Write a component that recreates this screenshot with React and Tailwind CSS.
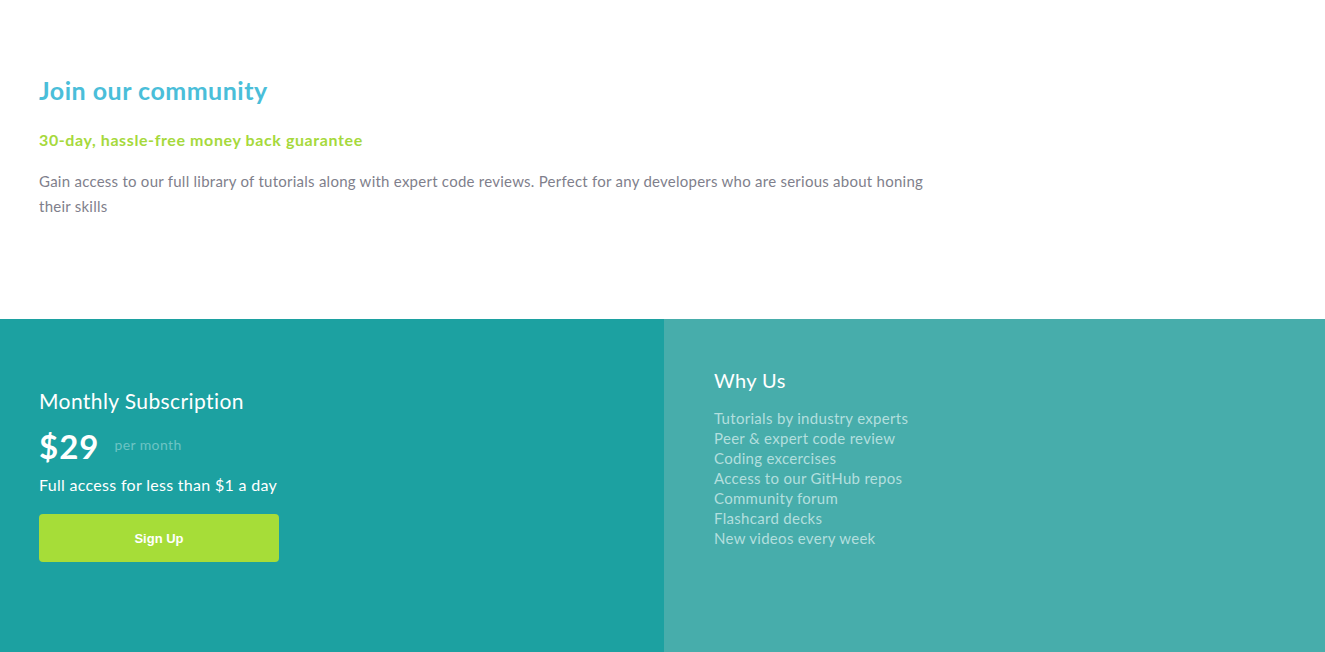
import React from 'react';

const perks = [
    'Tutorials by industry experts',
    'Peer & expert code review',
    'Coding excercises',
    'Access to our GitHub repos',
    'Community forum',
    'Flashcard decks',
    'New videos every week',
];

const App = () => {
    return (
        <div className="w-full min-h-[652px] bg-white font-['Lato',sans-serif]">
            <section className="h-[319px] px-[39px] pt-[75px]">
                <h1 className="text-[25px] leading-[30px] tracking-[0.5px] font-bold text-[#4abed9]">Join our community</h1>
                <h2 className="mt-[24px] text-[16px] leading-[22px] tracking-[0.6px] font-bold text-[#a6d93c]">
                    30-day, hassle-free money back guarantee
                </h2>
                <p className="mt-[18px] max-w-[900px] text-[15px] leading-[25px] tracking-[0.25px] text-[#7f7f8c]">
                    Gain access to our full library of tutorials along with expert code reviews. Perfect for any developers who are serious about honing their skills
                </p>
            </section>

            <section className="grid grid-cols-[664px_1fr] h-[333px]">
                <div className="bg-[#1ca1a1] px-[39px] pt-[69px] text-white">
                    <h3 className="text-[21px] leading-[26px] tracking-[0.4px]">Monthly Subscription</h3>
                    <div className="mt-[12px] flex items-center gap-[15px]">
                        <span className="text-[33px] leading-[40px] tracking-[1px] font-bold">$29</span>
                        <span className="text-[14px] tracking-[0.4px] text-[#6dc4c4] -mt-[4px]">per month</span>
                    </div>
                    <p className="mt-[8px] text-[16px] leading-[22px] tracking-[0.3px]">Full access for less than $1 a day</p>
                    <button className="mt-[18px] w-[240px] h-[48px] pt-[1px] rounded-[4px] bg-[#a6dd38] text-white text-[13px] font-bold font-['Liberation_Sans',sans-serif]">
                        Sign Up
                    </button>
                </div>
                <div className="bg-[#47adab] pl-[50px] pt-[48px]">
                    <h3 className="text-[20px] leading-[26px] tracking-[0.4px] text-white">Why Us</h3>
                    <ul className="mt-[15px] text-[15px] leading-[20px] tracking-[0.3px] text-[#b3dfde]">
                        {perks.map((p) => (
                            <li key={p}>{p}</li>
                        ))}
                    </ul>
                </div>
            </section>
        </div>
    );
};

export default App;
